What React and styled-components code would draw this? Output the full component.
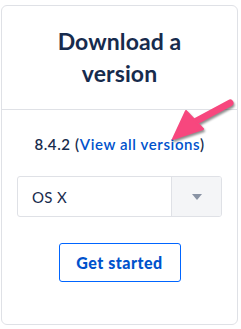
import React from 'react';
import styled, { createGlobalStyle } from 'styled-components';

const GlobalStyle = createGlobalStyle`
  body {
    margin: 0;
    background: #fff;
    font-family: 'Lato', 'Noto Sans', sans-serif;
  }
`;

const Card = styled.div`
  position: relative;
  box-sizing: border-box;
  width: 237px;
  height: 320px;
  margin: 5px 0 0 1px;
  border: 1px solid #dfe1e6;
  border-radius: 6px;
  display: flex;
  flex-direction: column;
`;

const Header = styled.div`
  height: 104px;
  box-sizing: border-box;
  border-bottom: 1px solid #dfe1e6;
  display: flex;
  align-items: center;
  justify-content: center;
  padding-bottom: 2px;
`;

const Title = styled.h2`
  margin: 0;
  font-size: 23px;
  line-height: 32px;
  font-weight: 700;
  color: #172b4d;
  text-align: center;
  letter-spacing: 0.1px;
`;

const Body = styled.div`
  display: flex;
  flex-direction: column;
  align-items: center;
  padding: 24px 15px 0 15px;
`;

const Version = styled.p`
  margin: 0;
  font-size: 15px;
  line-height: 20px;
  font-weight: 600;
  letter-spacing: 0.6px;
  color: #172b4d;
`;

const VersionLink = styled.a`
  color: #0052cc;
  text-decoration: none;
`;

const Select = styled.div`
  margin-top: 22px;
  align-self: stretch;
  height: 41px;
  box-sizing: border-box;
  border: 1px solid #dfe1e6;
  border-radius: 3px;
  display: flex;
  overflow: hidden;
`;

const SelectValue = styled.div`
  flex: 1;
  display: flex;
  align-items: center;
  padding-left: 14px;
  font-size: 15px;
  letter-spacing: 0.3px;
  color: #172b4d;
`;

const SelectToggle = styled.div`
  width: 49px;
  background: #f4f5f7;
  border-left: 1px solid #dfe1e6;
  display: flex;
  align-items: center;
  justify-content: center;
`;

const Caret = styled.span`
  width: 0;
  height: 0;
  border-left: 5px solid transparent;
  border-right: 5px solid transparent;
  border-top: 6px solid #8993a4;
`;

const Button = styled.button`
  margin-top: 26px;
  width: 122px;
  height: 39px;
  background: #fff;
  border: 1px solid #0065ff;
  border-radius: 3px;
  color: #0052cc;
  font-family: inherit;
  font-size: 16px;
  font-weight: 900;
  letter-spacing: 0.5px;
  cursor: pointer;
`;

const Pointer = styled.svg`
  position: absolute;
  left: 166px;
  top: 91px;
  filter: drop-shadow(1px 2px 1px rgba(0, 0, 0, 0.45));
`;

const App = () => (
  <>
    <GlobalStyle />
    <Card>
      <Header>
        <Title>
          Download a
          <br />
          version
        </Title>
      </Header>
      <Body>
        <Version>
          8.4.2 (<VersionLink href="#">View all versions</VersionLink>)
        </Version>
        <Select>
          <SelectValue>OS X</SelectValue>
          <SelectToggle>
            <Caret />
          </SelectToggle>
        </Select>
        <Button>Get started</Button>
      </Body>
      <Pointer width="72" height="50" viewBox="167 96 72 50">
        <line x1="229" y1="102" x2="188" y2="124" stroke="#f7477e" strokeWidth="7" strokeLinecap="round" />
        <polygon
          points="172,138 185,110 202,128"
          fill="#f7477e"
          stroke="#f7477e"
          strokeWidth="2"
          strokeLinejoin="round"
        />
      </Pointer>
    </Card>
  </>
);

export default App;
